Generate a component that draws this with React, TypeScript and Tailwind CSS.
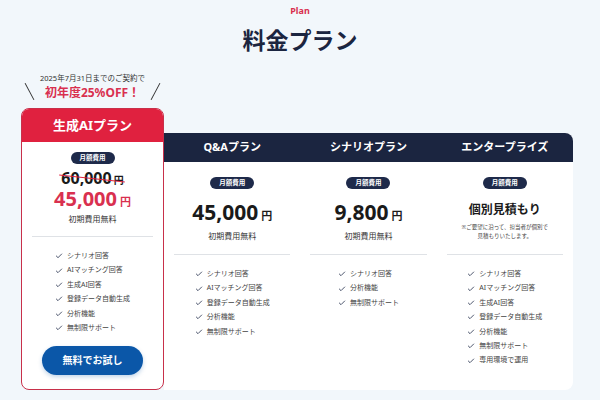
import { Check } from 'lucide-react';

const plans = [
  {
    name: 'Q&Aプラン',
    price: '45,000',
    features: ['シナリオ回答', 'AIマッチング回答', '登録データ自動生成', '分析機能', '無制限サポート'],
  },
  {
    name: 'シナリオプラン',
    price: '9,800',
    features: ['シナリオ回答', '分析機能', '無制限サポート'],
  },
  {
    name: 'エンタープライズ',
    price: null,
    features: ['シナリオ回答', 'AIマッチング回答', '生成AI回答', '登録データ自動生成', '分析機能', '無制限サポート', '専用環境で運用'],
  },
];

const featuredList = ['シナリオ回答', 'AIマッチング回答', '生成AI回答', '登録データ自動生成', '分析機能', '無制限サポート'];

const Badge = () => (
  <div className="mx-auto w-[44px] h-[12px] rounded-full bg-[#1e2a4a] flex items-center justify-center text-[6.5px] font-bold text-white leading-none">
    月額費用
  </div>
);

const FeatureList = ({ items }: { items: string[] }) => (
  <ul className="mx-auto w-fit">
    {items.map((item) => (
      <li key={item} className="h-[14.4px] flex items-center gap-[4px] text-[7px] text-[#444]">
        <Check size={8} strokeWidth={2.5} className="text-[#2a3550]" />
        <span>{item}</span>
      </li>
    ))}
  </ul>
);

export default function App() {
  return (
    <div className="w-[600px] h-[400px] overflow-hidden bg-[#f2f7fb] font-['Noto_Sans','Noto_Sans_CJK_JP',sans-serif]">
      <div className="pt-[5px] text-center">
        <p className="text-[9px] font-bold leading-[12px] text-[#d9304f]">Plan</p>
        <h1 className="mt-[7px] text-[23px] font-bold leading-[32px] text-[#1b2540]">料金プラン</h1>
      </div>

      <div className="ml-[21px] mt-[17px] flex items-end">
        {/* featured plan */}
        <div className="w-[143px] flex flex-col">
          <div className="flex items-end justify-between px-[8px] mb-[7px]">
            <div className="w-px h-[19px] bg-[#333] -rotate-[28deg]" />
            <div className="text-center">
              <p className="text-[7.5px] leading-[10px] text-[#333]">2025年7月31日までのご契約で</p>
              <p className="mt-[2px] text-[12px] font-bold leading-[16px] text-[#d9304f]">初年度25%OFF！</p>
            </div>
            <div className="w-px h-[19px] bg-[#333] rotate-[28deg]" />
          </div>

          <div className="h-[282px] rounded-[8px] border border-[#c8304a] bg-white overflow-hidden">
            <div className="h-[33px] bg-[#e0213f] flex items-center justify-center text-[13px] font-bold text-white">
              生成AIプラン
            </div>
            <div className="pt-[10px] flex flex-col">
              <Badge />
              <div className="mt-[6px] h-[16px] flex justify-center">
                <div className="relative flex items-baseline h-[16px] leading-[16px] text-[#1a1a1a]">
                  <span className="text-[16px] font-bold">60,000</span>
                  <span className="ml-[2px] text-[10px] font-bold">円</span>
                  <div className="absolute left-[-2px] right-[-2px] top-[8px] h-px bg-[#e0213f] rotate-[6deg]" />
                </div>
              </div>
              <div className="mt-[2px] h-[22px] flex items-baseline justify-center leading-[22px] text-[#d9304f]">
                <span className="text-[20px] font-bold">45,000</span>
                <span className="ml-[3px] text-[11px] font-bold">円</span>
              </div>
              <p className="mt-[3px] text-center text-[8px] leading-[12px] text-[#333]">初期費用無料</p>
              <div className="mt-[11px] mx-[10px] h-px bg-[#dfe2e6]" />
              <div className="mt-[12px]">
                <FeatureList items={featuredList} />
              </div>
              <button className="mt-[11px] mx-auto flex w-[101px] h-[29px] items-center justify-center rounded-full bg-[#0b57a8] text-[10px] font-bold text-white shadow-[0_2px_4px_rgba(11,87,168,0.25)]">
                無料でお試し
              </button>
            </div>
          </div>
        </div>

        {/* other plans */}
        <div className="w-[409px] h-[257px] bg-white rounded-r-[8px] overflow-hidden">
          <div className="grid grid-cols-3 h-[29px] bg-[#1b2540]">
            {plans.map((p) => (
              <div key={p.name} className="flex items-center justify-center text-[11px] font-bold text-white">
                {p.name}
              </div>
            ))}
          </div>
          <div className="grid grid-cols-3">
            {plans.map((p) => (
              <div key={p.name} className="pt-[15px] flex flex-col">
                <Badge />
                <div className="h-[65px] flex flex-col">
                  {p.price ? (
                    <>
                      <div className="mt-[11px] h-[24px] flex items-baseline justify-center leading-[24px] text-[#1a1a1a]">
                        <span className="text-[21px] font-bold">{p.price}</span>
                        <span className="ml-[3px] text-[11px] font-bold">円</span>
                      </div>
                      <p className="mt-[6px] text-center text-[8px] leading-[12px] text-[#333]">初期費用無料</p>
                    </>
                  ) : (
                    <>
                      <p className="mt-[13px] text-center text-[12px] font-bold leading-[16px] text-[#1a1a1a]">個別見積もり</p>
                      <p className="mt-[5px] text-center text-[5.5px] leading-[9px] text-[#444]">
                        ※ご要望に沿って、担当者が個別で
                        <br />
                        見積もりいたします。
                      </p>
                    </>
                  )}
                </div>
                <div className="mx-[10px] h-px bg-[#dfe2e6]" />
                <div className="mt-[12px]">
                  <FeatureList items={p.features} />
                </div>
              </div>
            ))}
          </div>
        </div>
      </div>
    </div>
  );
}
